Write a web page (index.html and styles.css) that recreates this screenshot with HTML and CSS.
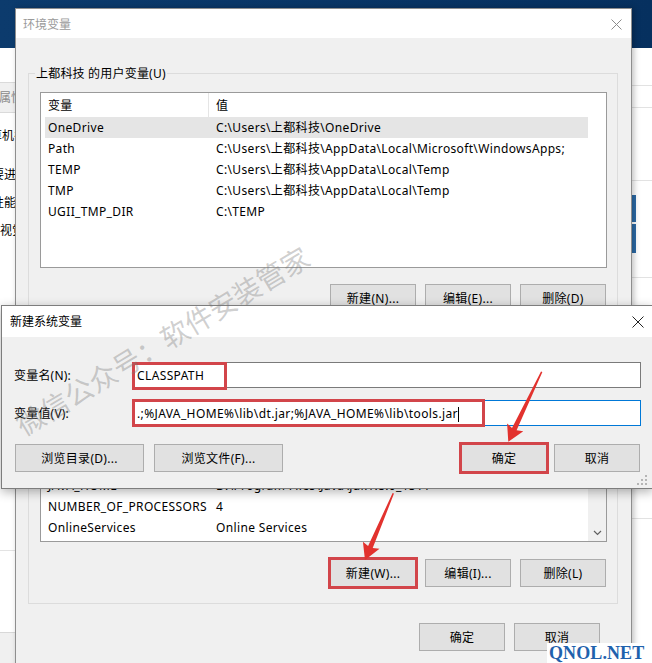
FILE: index.html
```html
<!DOCTYPE html>
<html lang="zh-CN">
<head>
<meta charset="utf-8">
<title>环境变量</title>
<link rel="stylesheet" href="styles.css">
</head>
<body>
<div class="desktop">
  <div class="backwin">
    <div class="bw-left">
      <div class="bw-top"></div>
      <div class="bw-title">系统属性</div>
      <div class="bw-tabs">计算机名</div>
      <div class="bw-text bw-in1">要进行</div>
      <div class="bw-text bw-in1">性能</div>
      <div class="bw-text bw-in2">视觉效果</div>
      <div class="bw-fill"></div>
      <div class="bw-sep"></div>
      <div class="bw-foot"></div>
    </div>
    <div class="bw-mid"></div>
    <div class="bw-right">
      <div class="bwr bwr1"></div>
      <div class="bwr bwr2"></div>
      <div class="bwr bwr3"></div>
      <div class="bwr bwr4"><div class="bw-scroll"></div></div>
      <div class="bwr bwr5"></div>
    </div>
  </div>

  <div class="win env">
    <div class="titlebar env-title">
      <span class="title inactive">环境变量</span>
      <svg class="close" width="11" height="11" viewBox="0 0 11 11"><path d="M0.5 0.5L10.5 10.5M10.5 0.5L0.5 10.5" stroke="#8c8c8c" stroke-width="1" fill="none"/></svg>
    </div>
    <div class="env-body">
      <div class="group">
        <div class="group-label">上都科技 的用户变量(U)</div>
        <div class="list">
          <div class="lv-rows">
            <div class="lv-head"><span class="c1">变量</span><span class="c2">值</span></div>
            <div class="lv-row selected"><span class="c1">OneDrive</span><span class="c2">C:\Users\上都科技\OneDrive</span></div>
            <div class="lv-row"><span class="c1">Path</span><span class="c2">C:\Users\上都科技\AppData\Local\Microsoft\WindowsApps;</span></div>
            <div class="lv-row"><span class="c1">TEMP</span><span class="c2">C:\Users\上都科技\AppData\Local\Temp</span></div>
            <div class="lv-row"><span class="c1">TMP</span><span class="c2">C:\Users\上都科技\AppData\Local\Temp</span></div>
            <div class="lv-row"><span class="c1">UGII_TMP_DIR</span><span class="c2">C:\TEMP</span></div>
          </div>
        </div>
        <div class="btnrow">
          <button class="btn">新建(N)...</button>
          <button class="btn">编辑(E)...</button>
          <button class="btn">删除(D)</button>
        </div>
      </div>

      <div class="group group2">
        <div class="group-label">系统变量(S)</div>
        <div class="list list2">
          <div class="lv-rows">
            <div class="lv-head"><span class="c1">变量</span><span class="c2">值</span></div>
            <div class="lv-row"><span class="c1">ComSpec</span><span class="c2">C:\WINDOWS\system32\cmd.exe</span></div>
            <div class="lv-row"><span class="c1">configsetroot</span><span class="c2">C:\WINDOWS\ConfigSetRoot</span></div>
            <div class="lv-row"><span class="c1">DriverData</span><span class="c2">C:\Windows\System32\Drivers\DriverData</span></div>
            <div class="lv-row"><span class="c1">FP_NO_HOST_CHECK</span><span class="c2">NO</span></div>
            <div class="lv-row"><span class="c1">JAVA_HOME</span><span class="c2">D:\Program Files\Java\jdk1.8.0_151\</span></div>
            <div class="lv-row"><span class="c1">NUMBER_OF_PROCESSORS</span><span class="c2">4</span></div>
            <div class="lv-row"><span class="c1">OnlineServices</span><span class="c2">Online Services</span></div>
          </div>
          <div class="vscroll">
            <div class="vs-arrow"><svg width="9" height="6" viewBox="0 0 9 6"><path d="M1 1L4.5 4.5L8 1" fill="none" stroke="#606060" stroke-width="1.2"/></svg></div>
          </div>
        </div>
        <div class="btnrow">
          <button class="btn marked">新建(W)...</button>
          <button class="btn">编辑(I)...</button>
          <button class="btn">删除(L)</button>
        </div>
      </div>

      <div class="btnrow footer">
        <button class="btn">确定</button>
        <button class="btn">取消</button>
      </div>
    </div>
  </div>

  <div class="win newvar">
    <div class="titlebar new-title">
      <span class="title">新建系统变量</span>
      <svg class="close" width="12" height="12" viewBox="0 0 12 12"><path d="M0.5 0.5L11.5 11.5M11.5 0.5L0.5 11.5" stroke="#222" stroke-width="1" fill="none"/></svg>
    </div>
    <div class="new-body">
      <div class="field">
        <label class="field-label">变量名(N):</label>
        <div class="input">CLASSPATH<span class="mark mark1"></span></div>
      </div>
      <div class="field field2">
        <label class="field-label">变量值(V):</label>
        <div class="input focused">.;%JAVA_HOME%\lib\dt.jar;%JAVA_HOME%\lib\tools.jar<span class="caret"></span><span class="mark mark2"></span></div>
      </div>
      <div class="new-buttons">
        <div class="bgroup">
          <button class="btn wide">浏览目录(D)...</button>
          <button class="btn wide">浏览文件(F)...</button>
        </div>
        <div class="bgroup bgroup-r">
          <button class="btn marked">确定</button>
          <button class="btn">取消</button>
        </div>
      </div>
    </div>
    <svg class="grip" width="10" height="10" viewBox="0 0 10 10"><g fill="#b5b5b5"><rect x="8" y="0" width="2" height="2"/><rect x="4" y="4" width="2" height="2"/><rect x="8" y="4" width="2" height="2"/><rect x="0" y="8" width="2" height="2"/><rect x="4" y="8" width="2" height="2"/><rect x="8" y="8" width="2" height="2"/></g></svg>
  </div>

  <svg class="arrows" width="652" height="663" viewBox="0 0 652 663">
    <polygon fill="#e2322e" points="542.4,372 516.6,430.2 523.3,431.2 508.3,441.7 507.1,423.4 512,428 541,371.4"/>
    <polygon fill="#e2322e" points="394,493.6 372.7,548.1 379.5,548.8 365,560 362.9,541.8 368.1,546.1 392.6,493"/>
  </svg>

  <div class="watermark">微信公众号：软件安装管家</div>
  <div class="qnol">QNOL.NET</div>
</div>
</body>
</html>
```

FILE: styles.css
```css
* { box-sizing: border-box; }
html, body { margin: 0; padding: 0; }
body {
  width: 652px;
  height: 663px;
  overflow: hidden;
  font-family: "Noto Sans", "Noto Sans CJK SC", sans-serif;
  font-size: 12px;
  line-height: 17px;
  color: #000;
}
.desktop {
  position: relative;
  width: 652px;
  height: 663px;
  overflow: hidden;
  background: linear-gradient(90deg, #0c3b6d, #06305f);
}

/* background window (system properties) */
.backwin {
  position: absolute;
  left: -40px;
  top: 48px;
  width: 732px;
  height: 615px;
  background: #fff;
  display: flex;
}
.bw-left {
  width: 55px;
  flex: none;
  display: flex;
  flex-direction: column;
  white-space: nowrap;
  overflow: hidden;
}
.bw-top { height: 34px; flex: none; }
.bw-title {
  height: 31px;
  flex: none;
  background: #f0f0f0;
  border-top: 1px solid #dadada;
  border-bottom: 1px solid #dadada;
  color: #8a8a8a;
  padding-left: 15px;
  line-height: 29px;
}
.bw-tabs { height: 48px; flex: none; padding: 14px 0 0 18px; }
.bw-text { height: 28px; flex: none; line-height: 28px; }
.bw-in1 { padding-left: 32px; }
.bw-in2 { padding-left: 40px; }
.bw-fill { height: 305px; flex: none; }
.bw-sep { height: 82px; flex: none; border-top: 1px solid #e3e3e3; }
.bw-foot { flex: 1; border-top: 1px solid #d8d8d8; background: #f0f0f0; }
.bw-mid { width: 617px; flex: none; }
.bw-right { width: 60px; flex: none; display: flex; flex-direction: column; }
.bwr { flex: none; border-bottom: 1px solid #e2e2e2; }
.bwr1 { height: 38px; }
.bwr2 { height: 22px; }
.bwr3 { height: 73px; }
.bwr4 { height: 97px; padding-top: 14px; }
.bwr5 { height: 241px; }
.bw-scroll {
  width: 4px;
  height: 58px;
  background: linear-gradient(180deg, #2c6aa6 0, #2c6aa6 47%, #ffffff 47%, #ffffff 50%, #2c6aa6 50%);
}

/* generic window */
.win {
  position: absolute;
  background: #f0f0f0;
  display: flex;
  flex-direction: column;
}
.titlebar {
  flex: none;
  background: #fff;
  display: flex;
  align-items: center;
  justify-content: space-between;
}
.title { white-space: nowrap; }
.title.inactive { color: #9a9a9a; }
.close { display: block; }

.btn {
  font: inherit;
  letter-spacing: 0.3px;
  color: #000;
  width: 86px;
  height: 28px;
  padding: 0;
  background: #e1e1e1;
  border: 1px solid #adadad;
  border-radius: 0;
  text-align: center;
  line-height: 27px;
}
.btn.wide { width: 129px; }
.btn.marked { outline: 3px solid #d2454a; outline-offset: -1px; }

/* environment variables dialog */
.env {
  left: 15px;
  top: 8px;
  width: 617px;
  height: 680px;
  border: 1px solid #8e8e8e;
  box-shadow: 2px 0 6px rgba(0, 0, 0, 0.25);
}
.env-title { height: 29px; padding: 1px 9px 0 7px; }
.env-body { padding: 0 13px 0 12px; }
.group {
  margin-top: 35px;
  border: 1px solid #dcdcdc;
  padding: 0 10px 16px 11px;
}
.group2 { margin-top: 18px; }
.group-label {
  width: max-content;
  margin: -9px 0 0 -5px;
  padding: 0 1px;
  background: #f0f0f0;
  line-height: 17px;
  white-space: nowrap;
  letter-spacing: 0.2px;
}
.list {
  margin-top: 10px;
  height: 176px;
  background: #fff;
  border: 1px solid #9a9a9a;
  padding: 1px 0 0 4px;
  overflow: hidden;
  display: flex;
  letter-spacing: 0.35px;
}
.lv-rows { width: 543px; flex: none; }
.lv-head, .lv-row {
  display: grid;
  grid-template-columns: 164px 379px;
  white-space: nowrap;
}
.lv-head { height: 24px; line-height: 24px; margin-top: -1px; }
.lv-row { height: 21px; line-height: 22px; }
.lv-row.selected { background: #e5e5e5; }
.c1 { padding-left: 3px; overflow: hidden; }
.c2 { padding-left: 7px; overflow: hidden; }
.lv-head .c1 { border-right: 1px solid #e5e5e5; }
.lv-head span { padding-top: 1px; }
.vscroll {
  margin-left: auto;
  margin-top: -1px;
  width: 18px;
  background: #f0f0f0;
  display: flex;
  flex-direction: column;
  justify-content: flex-end;
}
.vs-arrow {
  height: 17px;
  display: flex;
  align-items: center;
  justify-content: center;
}
.vs-arrow svg { display: block; }
.btnrow {
  display: flex;
  justify-content: flex-end;
  gap: 9px;
  margin-top: 16px;
  padding-right: 1px;
}
.group2 .btnrow { margin-top: 17px; }
.btnrow.footer { margin-top: 19px; padding-right: 18px; }

/* new system variable dialog */
.newvar {
  left: 1px;
  top: 305px;
  width: 652px;
  height: 184px;
  border: 1px solid #7d7d7d;
  box-shadow: 0 3px 10px rgba(0, 0, 0, 0.3);
}
.new-title { height: 31px; padding: 0 8px 0 8px; }
.new-body { padding: 25px 11px 0 12px; }
.field { display: flex; align-items: center; height: 26px; }
.field2 { margin-top: 12px; }
.field-label { width: 118px; flex: none; white-space: nowrap; letter-spacing: 0.2px; padding-top: 1px; }
.input {
  position: relative;
  flex: 1;
  height: 26px;
  background: #fff;
  border: 1px solid #7a7a7a;
  padding-left: 4px;
  line-height: 25px;
  white-space: nowrap;
  letter-spacing: 0.38px;
}
.input.focused { border-color: #0078d7; }
.caret {
  display: inline-block;
  width: 1px;
  height: 15px;
  background: #000;
  vertical-align: middle;
  margin-left: 0;
}
.mark {
  position: absolute;
  left: -1px;
  border: 3px solid #d2454a;
  height: 28px;
}
.mark1 { top: -1px; width: 95px; }
.mark2 { top: -2px; width: 353px; }
.new-buttons {
  margin-top: 18px;
  display: flex;
  justify-content: space-between;
  padding: 0 1px 0 1px;
}
.bgroup { display: flex; gap: 10px; }
.bgroup-r { gap: 7px; }
.grip { position: absolute; right: 5px; bottom: 3px; }

/* overlays */
.arrows { position: absolute; left: 0; top: 0; pointer-events: none; }
.watermark {
  position: absolute;
  left: -6px;
  top: 320px;
  width: 336px;
  line-height: 40px;
  text-align: center;
  font-size: 28px;
  font-family: "Noto Sans CJK SC", sans-serif;
  font-weight: 400;
  color: rgba(120, 120, 120, 0.36);
  transform: rotate(-31deg);
  white-space: nowrap;
  pointer-events: none;
}
.qnol {
  position: absolute;
  right: 0;
  bottom: 0;
  width: 105px;
  height: 20px;
  background: #fff;
  padding-left: 2px;
  font-family: "Liberation Serif", serif;
  font-weight: bold;
  font-size: 18px;
  line-height: 21px;
  letter-spacing: 0.1px;
  color: #1f62ad;
  white-space: nowrap;
}
```
